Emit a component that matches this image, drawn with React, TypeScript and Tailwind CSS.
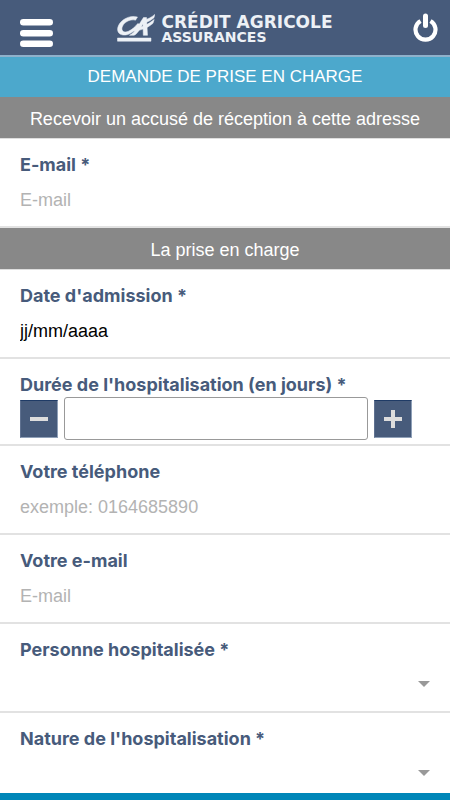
import type { ReactNode } from "react";

const labelClass =
  "block font-['Inter','Liberation_Sans',sans-serif] text-lg leading-6 font-bold text-[#475b7b]";
const inputClass =
  "block h-8 w-full bg-transparent text-lg outline-none";

function Section({ children }: { children: ReactNode }) {
  return (
    <h2 className="flex h-[42px] items-center justify-center border-b border-[#dedede] bg-[#888888] px-4 pt-[2px] text-lg text-white">
      {children}
    </h2>
  );
}

function Row({ children }: { children: ReactNode }) {
  return (
    <div className="h-[89px] border-b-2 border-[#e2e2e2] px-5 pt-[14px]">
      {children}
    </div>
  );
}

type FieldProps = {
  id: string;
  label: string;
  placeholder: string;
  type?: string;
  dark?: boolean;
};

function TextField({ id, label, placeholder, type = "text", dark }: FieldProps) {
  return (
    <Row>
      <label htmlFor={id} className={labelClass}>
        {label}
      </label>
      <input
        id={id}
        type={type}
        placeholder={placeholder}
        className={`${inputClass} mt-[7px] ${dark ? "placeholder:text-black" : "placeholder:text-[#b3b3b3]"}`}
      />
    </Row>
  );
}

function SelectField({ id, label }: { id: string; label: string }) {
  return (
    <Row>
      <label htmlFor={id} className={labelClass}>
        {label}
      </label>
      <div className="relative mt-[7px]">
        <select id={id} className={`${inputClass} appearance-none`}>
          <option value=""></option>
        </select>
        <svg
          viewBox="0 0 12 6"
          className="pointer-events-none absolute top-3 right-0 h-[6px] w-3"
          aria-hidden="true"
        >
          <path d="M0 0h12L6 6z" fill="#999999" />
        </svg>
      </div>
    </Row>
  );
}

function StepButton({ label, d }: { label: string; d: string }) {
  return (
    <button
      type="button"
      aria-label={label}
      className="flex h-[38px] w-[38px] shrink-0 items-center justify-center border border-t-[#1f3b66] border-r-[#8fa0b8] border-b-[#8fa0b8] border-l-[#5f7190] bg-[#475b7b]"
    >
      <svg viewBox="0 0 18 18" className="h-[18px] w-[18px]" aria-hidden="true">
        <path d={d} fill="#dddddd" />
      </svg>
    </button>
  );
}

function Logo() {
  return (
    <div className="flex items-start gap-[6px] text-[#edf1f6]">
      <svg
        viewBox="0 0 38 28"
        className="h-7 w-[38px]"
        fill="currentColor"
        stroke="currentColor"
        strokeWidth="0.5"
        aria-hidden="true"
      >
        <path d="M20.500 3C12 .5 2.500 6.500 .8 13.500C-.8 20.500 6.500 23 13 19.600C17 17.500 20.500 14 23 10.500L20.800 9.500C18 13 15 15.600 11.500 17.200C7.500 19 4.300 17.500 5 13.800C6 9 12.500 4.600 18.500 6.200Z" />
        <path d="M12.500 21.300C18 18.500 21.500 11 26.500 3.500H29.500L30.500 21.300H26.300L26 10C22.500 15.500 20.500 20 17 21.300Z" />
        <path d="M18 14.200C25 13.500 31 10.500 37.200 5.500L36 9.300C31 13.600 25 16.400 17 16.900Z" />
        <path d="M26 6.200C31 5.200 34.500 3.300 37.800 .4L37 3.700C34 6.400 31 8 26.500 9Z" />
        <path d="M.5 24H34V27.200H.5Z" />
      </svg>
      <div className="font-['DejaVu_Sans',sans-serif] font-bold">
        <div className="text-[17px] leading-4">CRÉDIT AGRICOLE</div>
        <div className="text-sm leading-[14px]">ASSURANCES</div>
      </div>
    </div>
  );
}

export default function App() {
  return (
    <div className="flex h-screen flex-col bg-white font-['Liberation_Sans',Arial,sans-serif]">
      <header className="grid h-[57px] shrink-0 grid-cols-[1fr_auto_1fr] items-start border-b-2 border-[#8fb1cb] bg-[#475b7b] px-3">
        <button type="button" aria-label="Menu" className="mt-[19px] ml-2 justify-self-start">
          <svg viewBox="0 0 33 28" className="h-7 w-[33px]" aria-hidden="true">
            <g fill="#ffffff">
              <rect width="33" height="6.600" rx="3.300" />
              <rect y="10.900" width="33" height="6.600" rx="3.300" />
              <rect y="21.400" width="33" height="6.600" rx="3.300" />
            </g>
          </svg>
        </button>
        <div className="mt-[14px]">
          <Logo />
        </div>
        <button type="button" aria-label="Déconnexion" className="mt-[13px] justify-self-end">
          <svg viewBox="0 0 25 30" className="h-[30px] w-[25px]" aria-hidden="true">
            <path
              d="M7.500 8A10 10 0 1 0 17.500 8"
              fill="none"
              stroke="#ffffff"
              strokeWidth="4.200"
            />
            <path
              d="M12.500 3V12.500"
              stroke="#ffffff"
              strokeWidth="5"
              strokeLinecap="round"
            />
          </svg>
        </button>
      </header>
      <main className="min-h-0 flex-1 overflow-y-auto [scrollbar-width:none]">
        <h1 className="flex h-10 items-center justify-center bg-[#4ca8cc] text-[17px] text-white">
          DEMANDE DE PRISE EN CHARGE
        </h1>
        <form>
          <Section>Recevoir un accusé de réception à cette adresse</Section>
          <TextField id="ack-email" type="email" label="E-mail *" placeholder="E-mail" />
          <Section>La prise en charge</Section>
          <TextField id="admission" label="Date d'admission *" placeholder="jj/mm/aaaa" dark />
          <div className="h-[87px] border-b-2 border-[#e2e2e2] px-5 pt-[14px]">
            <label htmlFor="duration" className={labelClass}>
              Durée de l'hospitalisation (en jours) *
            </label>
            <div className="flex items-center gap-[6px] pr-[18px]">
              <StepButton label="Diminuer" d="M0 7h18v4H0z" />
              <input
                id="duration"
                type="text"
                inputMode="numeric"
                className="h-[43px] min-w-0 flex-1 rounded-[3px] border border-[#999999] px-2 text-lg"
              />
              <StepButton label="Augmenter" d="M7 0h4v7h7v4h-7v7H7v-7H0V7h7z" />
            </div>
          </div>
          <TextField id="phone" type="tel" label="Votre téléphone" placeholder="exemple: 0164685890" />
          <TextField id="email" type="email" label="Votre e-mail" placeholder="E-mail" />
          <SelectField id="person" label="Personne hospitalisée *" />
          <SelectField id="nature" label="Nature de l'hospitalisation *" />
        </form>
      </main>
      <footer className="h-[7px] shrink-0 bg-[#0086b8]" />
    </div>
  );
}
